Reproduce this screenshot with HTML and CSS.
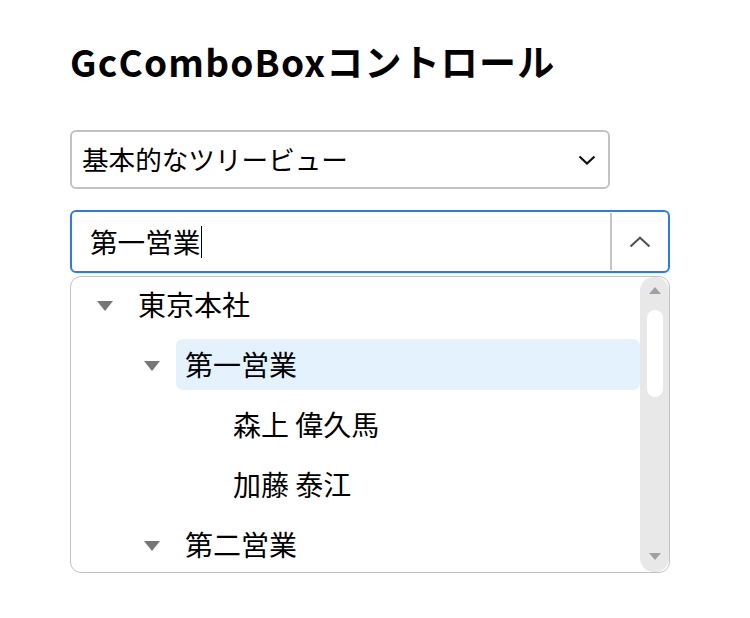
FILE: index.html
```html
<!DOCTYPE html>
<html lang="ja">
<head>
<meta charset="utf-8">
<title>GcComboBoxコントロール</title>
<link rel="stylesheet" href="styles.css">
</head>
<body>
<div class="page">
  <h1 class="title">GcComboBoxコントロール</h1>

  <div class="select">
    <span class="select-text">基本的なツリービュー</span>
    <svg class="select-chevron" width="18" height="10" viewBox="0 0 18 10"><path d="M1.5 1.5 L9 8.5 L16.5 1.5" fill="none" stroke="#111" stroke-width="2.2"/></svg>
  </div>

  <div class="combo">
    <div class="combo-input"><span class="combo-text">第一営業</span><span class="caret"></span></div>
    <div class="combo-sep"></div>
    <div class="combo-btn">
      <svg width="22" height="12" viewBox="0 0 22 12"><path d="M1.5 10.5 L11 1.8 L20.5 10.5" fill="none" stroke="#555" stroke-width="2.2"/></svg>
    </div>
  </div>

  <div class="dropdown">
    <div class="tree">
      <div class="row lv0"><span class="toggle"><span class="tri"></span></span><span class="label">東京本社</span></div>
      <div class="row lv1"><span class="toggle"><span class="tri"></span></span><span class="label selected">第一営業</span></div>
      <div class="row lv2"><span class="toggle"></span><span class="label">森上 偉久馬</span></div>
      <div class="row lv2"><span class="toggle"></span><span class="label">加藤 泰江</span></div>
      <div class="row lv1"><span class="toggle"><span class="tri"></span></span><span class="label">第二営業</span></div>
    </div>
    <div class="scrollbar">
      <span class="sb-up"></span>
      <span class="sb-thumb"></span>
      <span class="sb-fill"></span>
      <span class="sb-down"></span>
    </div>
  </div>
</div>
</body>
</html>
```

FILE: styles.css
```css
html, body {
  margin: 0;
  padding: 0;
  background: #fff;
}

body {
  font-family: "Noto Sans CJK JP", "Noto Sans", sans-serif;
  color: #000;
}

.page {
  padding: 36px 0 0 70px;
  width: 600px;
}

.title {
  margin: 0;
  font-size: 37px;
  line-height: 50px;
  font-weight: 700;
  letter-spacing: 1.2px;
}

.select {
  margin-top: 44px;
  width: 540px;
  height: 59px;
  box-sizing: border-box;
  border: 2px solid #c2c2c2;
  border-radius: 6px;
  display: flex;
  align-items: center;
  padding: 0 12px 0 10px;
}

.select-text {
  flex: 1;
  font-size: 26.6px;
  line-height: 1;
}

.select-chevron {
  display: block;
}

.combo {
  margin-top: 21px;
  width: 600px;
  height: 63px;
  box-sizing: border-box;
  border: 2px solid #2a7bf0;
  border-radius: 6px;
  display: flex;
  align-items: stretch;
}

.combo-input {
  flex: 1;
  display: flex;
  align-items: center;
  padding-left: 18px;
}

.combo-text {
  font-size: 27.6px;
  line-height: 1;
}

.caret {
  display: inline-block;
  width: 1px;
  height: 32px;
  background: #000;
  margin-left: 1px;
}

.combo-sep {
  width: 2px;
  background: #c4c4c4;
  margin: 1px 0;
}

.combo-btn {
  width: 56px;
  display: flex;
  align-items: center;
  justify-content: center;
}

.combo-btn svg {
  display: block;
}

.dropdown {
  margin-top: 3px;
  width: 600px;
  height: 297px;
  box-sizing: border-box;
  border: 1.5px solid #c2c2c2;
  border-radius: 11px;
  overflow: hidden;
  display: flex;
}

.tree {
  flex: 1;
  margin-top: -3px;
}

.row {
  height: 60px;
  display: flex;
  align-items: center;
}

.lv0 { padding-left: 26px; }
.lv1 { padding-left: 73px; }
.lv2 { padding-left: 121px; }

.toggle {
  width: 32px;
  flex: none;
  display: flex;
  align-items: center;
  padding-top: 3px;
}

.tri {
  width: 0;
  height: 0;
  border-left: 8px solid transparent;
  border-right: 8px solid transparent;
  border-top: 10px solid #777;
}

.label {
  flex: 1;
  height: 51px;
  display: flex;
  align-items: center;
  padding-left: 9px;
  font-size: 28px;
  border-radius: 7px;
}

.label.selected {
  background: #e4f2fd;
}

.scrollbar {
  width: 29px;
  flex: none;
  background: #e8e8e8;
  border-radius: 14px;
  display: flex;
  flex-direction: column;
  align-items: center;
}

.sb-up {
  margin-top: 10px;
  width: 0;
  height: 0;
  border-left: 6px solid transparent;
  border-right: 6px solid transparent;
  border-bottom: 7px solid #a0a0a0;
}

.sb-thumb {
  margin-top: 16px;
  width: 16px;
  height: 87px;
  background: #fff;
  border-radius: 8px;
}

.sb-fill {
  flex: 1;
}

.sb-down {
  margin-bottom: 12px;
  width: 0;
  height: 0;
  border-left: 6px solid transparent;
  border-right: 6px solid transparent;
  border-top: 7px solid #a0a0a0;
}
```
